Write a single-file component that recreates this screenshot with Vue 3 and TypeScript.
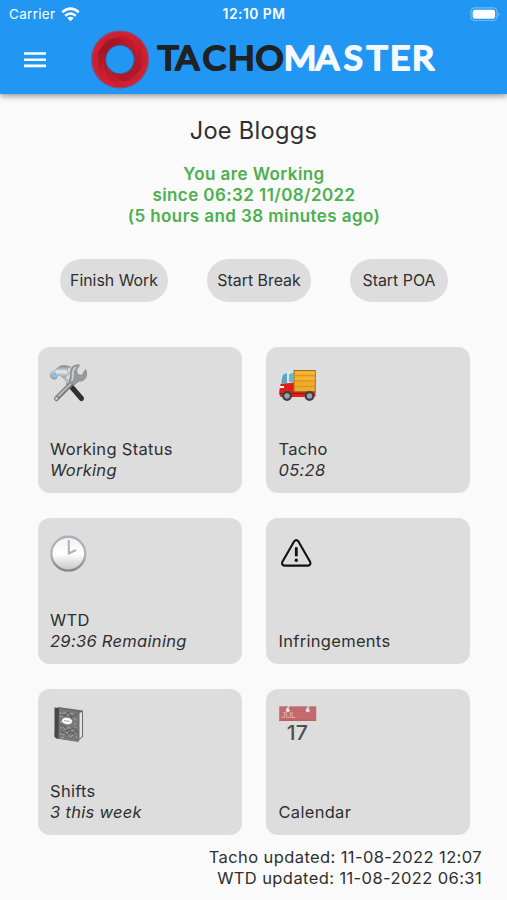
<script setup lang="ts">
interface Tile {
  icon: string
  title: string
  detail?: string
}

const actions: string[] = ['Finish Work', 'Start Break', 'Start POA']

const tiles: Tile[] = [
  { icon: 'tools', title: 'Working Status', detail: 'Working' },
  { icon: 'truck', title: 'Tacho', detail: '05:28' },
  { icon: 'clock', title: 'WTD', detail: '29:36 Remaining' },
  { icon: 'warning', title: 'Infringements' },
  { icon: 'book', title: 'Shifts', detail: '3 this week' },
  { icon: 'calendar', title: 'Calendar' },
]

const blades: number[] = Array.from({ length: 8 }, (_, i) => i * 45)
</script>

<template>
  <div class="screen">
    <header class="header">
      <div class="status-bar">
        <div class="carrier">
          <span>Carrier</span>
          <svg width="19" height="15" viewBox="0 0 19 15">
            <g fill="none" stroke="#fff" stroke-width="2.5">
              <path d="M1.2 5.3Q9.5 -2 17.8 5.3" />
              <path d="M4.2 8.7Q9.5 4.2 14.8 8.7" />
            </g>
            <path d="M6.3 11Q9.5 8.4 12.7 11L9.5 14.3Z" fill="#fff" />
          </svg>
        </div>
        <span class="time">12:10 PM</span>
        <svg class="battery" width="31" height="15" viewBox="0 0 31 15">
          <rect x=".9" y=".9" width="26" height="12.6" rx="3.8" fill="none" stroke="#fff" stroke-opacity=".35" stroke-width="1.2" />
          <rect x="2.7" y="2.7" width="22.4" height="9" rx="2.2" fill="#fff" />
          <path d="M28.4 5.2Q30.6 7.2 28.4 9.2Z" fill="#fff" fill-opacity=".4" />
        </svg>
      </div>
      <div class="app-bar">
        <svg class="menu" width="22" height="16" viewBox="0 0 22 16">
          <path d="M0 1.5H22M0 7.7H22M0 13.9H22" stroke="#fff" stroke-width="2.6" />
        </svg>
        <svg class="logo" width="350" height="60" viewBox="0 0 350 60">
          <defs>
            <linearGradient id="blade" x1="0" y1="0" x2="1" y2="0">
              <stop offset="0" stop-color="#8c1220" stop-opacity="0" />
              <stop offset="1" stop-color="#7c0f1c" stop-opacity=".45" />
            </linearGradient>
            <linearGradient id="shade" x1="0" y1="0" x2="1" y2="1">
              <stop offset=".15" stop-color="#8e1320" stop-opacity=".6" />
              <stop offset=".5" stop-color="#c41f2e" stop-opacity="0" />
              <stop offset=".9" stop-color="#8e1320" stop-opacity=".4" />
            </linearGradient>
          </defs>
          <circle cx="30" cy="29.5" r="21.3" fill="none" stroke="#d32031" stroke-width="13" />
          <circle cx="30" cy="29.5" r="28.2" fill="none" stroke="#c71e30" stroke-opacity=".6" stroke-width="1.6" />
          <circle cx="30" cy="29.5" r="18.5" fill="none" stroke="url(#shade)" stroke-width="7.5" />
          <path
            v-for="angle in blades"
            :key="angle"
            d="M4 19C14 1 38 4 45 28C38 12 20 9 4 19Z"
            fill="url(#blade)"
            :transform="`rotate(${angle} 30 29.5)`"
          />
          <g class="wordmark" transform="scale(1.08 1)">
            <text class="dark" x="62.8 79.2 104.1 127.7 153.2" y="39.8">TACHO</text>
            <text class="light" x="179.4 208.7 234.9 256.2 277.8 298.1" y="39.8">MASTER</text>
          </g>
        </svg>
      </div>
    </header>

    <main>
      <h1>Joe Bloggs</h1>
      <p class="state">You are Working<br />since 06:32 11/08/2022<br />(5 hours and 38 minutes ago)</p>

      <div class="actions">
        <button v-for="action in actions" :key="action" type="button">{{ action }}</button>
      </div>

      <section class="tiles">
        <article v-for="tile in tiles" :key="tile.title" class="tile">
          <svg v-if="tile.icon === 'tools'" width="38" height="40" viewBox="0 0 38 40">
            <defs>
              <linearGradient id="steel" x1="0" y1="0" x2="0" y2="1">
                <stop offset="0" stop-color="#7b8387" />
                <stop offset=".45" stop-color="#e6eaec" />
                <stop offset="1" stop-color="#8b9093" />
              </linearGradient>
            </defs>
            <path d="M19 20L31.500 34.500" stroke="#303133" stroke-width="5" stroke-linecap="round" />
            <path d="M14 13L21 22" stroke="#b9bdbf" stroke-width="3.5" />
            <path d="M24 17L6.5 34.5" stroke="#77797b" stroke-width="5" stroke-linecap="round" />
            <path d="M24 16.5L8 32.5" stroke="#b9bbbc" stroke-width="2" />
            <circle cx="6.5" cy="34.5" r="1.3" fill="#dedede" />
            <path d="M29.500 1C23 0 19 5 20.500 11L19 18L24 21L29 17C35 18 38.500 11 35.500 5.500L32 11.500L27.500 10.500L26.500 6Z" fill="#989b9d" stroke="#7c8082" stroke-width=".7" />
            <path d="M26 3Q22 6 23 11L22 17" stroke="#d3d6d7" stroke-width="1.5" fill="none" />
            <path d="M.5 10Q1 7 5 7C8 1.500 13 0 21 3C17 3.5 16 6 19 10L14 14L8.5 10.500L6 15Q0 16 .5 10Z" fill="url(#steel)" stroke="#8a9195" stroke-width=".6" />
            <path d="M1.500 9L5.5 8L7.5 12L5 14.5Q1.500 14 1.500 9Z" fill="#8bbce2" />
          </svg>

          <svg v-else-if="tile.icon === 'truck'" width="38" height="40" viewBox="0 0 38 40">
            <path d="M2 11Q4 7.5 9 7.5H15V25H0V21Z" fill="#d7e7ec" />
            <path d="M3.5 11.5Q5 9 8 9V19.5H2Z" fill="#5fa6bc" />
            <path d="M10 10.5Q12 8.5 14.5 9V18H10Z" fill="#67b8ca" />
            <path d="M1.5 20L15 18.5V27H36.5V32Q36 33 34 33H2Q0 32 .3 27Z" fill="#de201d" />
            <rect x="15" y="6.5" width="21.3" height="21" fill="#efa92b" stroke="#99751e" stroke-width="1" />
            <path d="M16 11.5H36M16 17H36M16 22.5H36" stroke="#dc9422" stroke-width="1" />
            <path d="M16 9H36M16 14.5H36" stroke="#fcbd3a" stroke-width="1.5" />
            <path d="M1 23H5" stroke="#fff" stroke-width="2" />
            <path d="M.5 29.5H5M12 29.5H26" stroke="#8d1716" stroke-width="1.2" />
            <g fill="#9ca1a5" stroke="#3c4043" stroke-width="2.2">
              <circle cx="8" cy="32" r="3.8" />
              <circle cx="30.5" cy="32" r="3.8" />
            </g>
          </svg>

          <svg v-else-if="tile.icon === 'clock'" width="38" height="40" viewBox="0 0 38 40">
            <defs>
              <linearGradient id="face" x1="0" y1="0" x2="0" y2="1">
                <stop offset="0" stop-color="#eff1f3" />
                <stop offset=".5" stop-color="#ffffff" />
                <stop offset="1" stop-color="#c4c4c5" />
              </linearGradient>
              <linearGradient id="rim" x1="0" y1="0" x2="0" y2="1">
                <stop offset="0" stop-color="#a9b0bb" />
                <stop offset=".5" stop-color="#b4b6b9" />
                <stop offset="1" stop-color="#858688" />
              </linearGradient>
            </defs>
            <circle cx="18.3" cy="18.7" r="16.9" fill="url(#face)" stroke="url(#rim)" stroke-width="2.4" />
            <path d="M18.8 5V18.5L26 15" fill="none" stroke="#b0b2b2" stroke-width="2.1" />
          </svg>

          <svg v-else-if="tile.icon === 'warning'" width="38" height="40" viewBox="0 0 38 40">
            <path d="M15.2 6.3Q17.2 3.9 19.3 6.3L31.2 27Q32.1 30.2 29.2 30.6H5.3Q2.3 30.2 3.3 27Z" fill="none" stroke="#111" stroke-width="2.1" stroke-linejoin="round" />
            <path d="M17.3 12.2V21.3" stroke="#111" stroke-width="2.8" />
            <circle cx="17.3" cy="25.3" r="1.7" fill="#111" />
          </svg>

          <svg v-else-if="tile.icon === 'book'" width="38" height="40" viewBox="0 0 38 40">
            <path d="M8 1L33 4.5V30.5L28 35.5L6 32Z" fill="#6b6b6b" />
            <path d="M29.5 7L32 6V30L29.5 33Z" fill="#e5e5e5" />
            <path d="M7 2L28.5 6V36L6 32.5L4.5 30Z" fill="#777" />
            <path d="M4.5 1.5L9 2L8.5 33L4.5 31Z" fill="#484848" />
            <g transform="translate(0 -1)">
              <path d="M10 7L12 9L15 7L18 10L22 8L25 11M10 11L13 12M23 13L27 15M10 16L12 18M10 23L13 21L15 25L19 22L22 26L26 22M10 28L14 30L17 27L20 32L25 29L27 33M11 33L14 32M26 18L24 20" fill="none" stroke="#a8a8a8" stroke-width=".9" />
              <path d="M11 9L15 11L18 7L21 12L27 9M10 20L15 22L17 26L24 23L27 27M10 26L17 30L21 27L26 31" fill="none" stroke="#505050" stroke-width=".8" />
              <ellipse cx="17" cy="16" rx="5.5" ry="3.6" fill="#fff" stroke="#777" stroke-width=".6" transform="rotate(8 17 16)" />
              <path d="M14 15.5L20 16.5" stroke="#aaa" stroke-width="1" />
            </g>
          </svg>

          <svg v-else width="38" height="40" viewBox="0 0 38 40">
            <rect x=".2" y=".3" width="37" height="14.5" fill="#c36a6e" />
            <path d="M0 14.2H37.2" stroke="#b4565b" stroke-width="1" />
            <circle cx="8.8" cy="4.3" r="2" fill="#e5e2e2" />
            <circle cx="28.7" cy="4.3" r="2" fill="#e5e2e2" />
            <path d="M7.7 4L10 0M27.6 4L30 0" stroke="#e5e2e2" stroke-width="1.3" />
            <text class="month" x="2.5" y="12.4">JUL</text>
            <text class="day" x="7.8" y="34.4" textLength="21" lengthAdjust="spacingAndGlyphs">17</text>
          </svg>

          <div class="caption">
            <div>{{ tile.title }}</div>
            <em v-if="tile.detail">{{ tile.detail }}</em>
          </div>
        </article>
      </section>

      <footer>
        <div>Tacho updated: 11-08-2022 12:07</div>
        <div>WTD updated: 11-08-2022 06:31</div>
      </footer>
    </main>
  </div>
</template>

<style>
body {
  background: #fafafa;
}
</style>

<style scoped>
.screen {
  width: 507px;
  height: 900px;
  overflow: hidden;
  background: #fafafa;
  color: #2f2f2f;
  font-family: Inter, "Liberation Sans", sans-serif;
  font-size: 16.5px;
  line-height: 21px;
  letter-spacing: 0.3px;
}

.header {
  height: 94px;
  background: #2196f3;
  box-shadow: 0 2px 6px rgba(0, 0, 0, 0.42);
}

.status-bar {
  display: grid;
  grid-template-columns: 1fr auto 1fr;
  align-items: center;
  height: 28px;
  padding: 0 6px 0 9px;
  color: #fff;
  font-size: 13.5px;
}

.carrier {
  display: flex;
  align-items: center;
  gap: 6px;
}

.time {
  margin-right: 2px;
  font-weight: 600;
  font-size: 13.8px;
  letter-spacing: 0.5px;
}

.battery {
  justify-self: end;
}

.app-bar {
  display: flex;
  align-items: flex-start;
  height: 66px;
  padding: 2px 0 0 24px;
}

.menu {
  margin-top: 22px;
}

.logo {
  margin-left: 44px;
}

.wordmark {
  font-family: Lato, sans-serif;
  font-size: 32.5px;
  font-weight: 400;
  letter-spacing: 0;
  stroke-width: 2.2px;
  stroke-linejoin: round;
}

.dark {
  fill: #1f2224;
  stroke: #1f2224;
}

.light {
  fill: #f5f9ff;
  stroke: #f5f9ff;
}

h1 {
  margin: 22px 0 0;
  font-size: 23.6px;
  font-weight: 400;
  line-height: 30px;
  text-align: center;
  letter-spacing: 0.3px;
}

.state {
  margin: 18px 0 0;
  padding-left: 1px;
  color: #4caf50;
  font-size: 17px;
  font-weight: 600;
  letter-spacing: 0.42px;
  text-align: center;
}

.actions {
  display: flex;
  justify-content: space-between;
  padding: 32px 59px 0 60px;
}

button {
  height: 43px;
  min-width: 98px;
  padding: 0 10px;
  border: 0;
  border-radius: 22px;
  background: #ddd;
  color: inherit;
  font: inherit;
  font-size: 15.9px;
  letter-spacing: 0;
}

.tiles {
  display: grid;
  grid-template-columns: 204px 204px;
  grid-auto-rows: 146px;
  gap: 25px 24.5px;
  margin: 45px 0 0 37.5px;
}

.tile {
  display: flex;
  flex-direction: column;
  justify-content: space-between;
  box-sizing: border-box;
  padding: 17px 12.5px 12px;
  border-radius: 12px;
  background: #ddd;
}

.month {
  font-family: "Liberation Sans", sans-serif;
  font-size: 8.5px;
  letter-spacing: -0.5px;
  fill: #e2b4b6;
}

.day {
  font-size: 20.5px;
  font-weight: 500;
  letter-spacing: 0;
  fill: #505050;
}

footer {
  margin: 12px 25px 0 0;
  letter-spacing: 0.4px;
  text-align: right;
}
</style>
